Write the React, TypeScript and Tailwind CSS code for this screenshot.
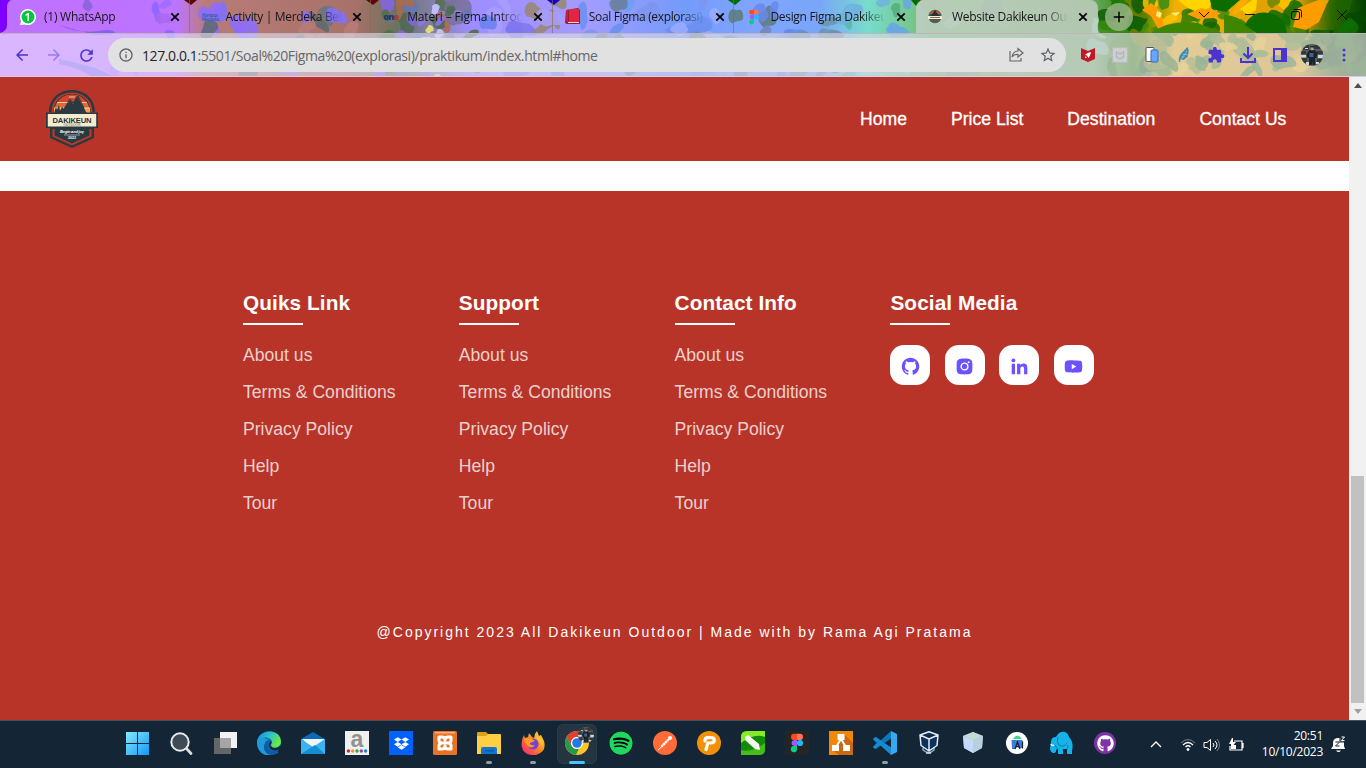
import React from 'react';
import type { ReactNode } from 'react';
import { BiLogoGithub, BiLogoInstagramAlt, BiLogoLinkedin, BiLogoYoutube } from 'react-icons/bi';
import { FaSpotify, FaDropbox, FaGithub } from 'react-icons/fa';
import { MdExtension, MdArrowBack, MdArrowForward, MdRefresh, MdAdd, MdStarBorder, MdOutlineInfo } from 'react-icons/md';

function makeRandom(seed: number) {
  let s = seed;
  return () => {
    s = (s * 16807) % 2147483647;
    return s / 2147483647;
  };
}

type Zone = { from: number; to: number; colors: string[]; count: number; size: number };

const zones: Zone[] = [
  { from: 75, to: 190, colors: ['#8d63ff', '#a868ee', '#8a62dc', '#9f6cff'], count: 9, size: 0.6 },
  { from: 200, to: 362, colors: ['#8d6cff', '#8c6cff', '#6b7480', '#b97c78', '#7f70ff', '#5f6a6c'], count: 34, size: 1 },
  { from: 372, to: 475, colors: ['#4c6a50', '#aa6b4c', '#8465e8', '#546d4a', '#77719a', '#6174bd'], count: 46, size: 0.75 },
  { from: 420, to: 440, colors: ['#eeec73', '#c9c9ff', '#8f70ff'], count: 12, size: 0.35 },
  { from: 485, to: 560, colors: ['#8375ee', '#6681ef', '#98876c', '#a99dff'], count: 16, size: 0.9 },
  { from: 560, to: 735, colors: ['#6b8fee', '#697e97', '#7e95ee', '#668790', '#9babff', '#6f9df5'], count: 30, size: 0.9 },
  { from: 735, to: 840, colors: ['#5c7d78', '#6988e9', '#7784bb', '#6b94ac', '#6f93f5'], count: 24, size: 0.9 },
  { from: 840, to: 912, colors: ['#55ad7d', '#57b8a4', '#69a6e6', '#83dfb7', '#6fb3e0'], count: 17, size: 0.8 },
  { from: 925, to: 1100, colors: ['#73a96c', '#6da879', '#7ab473', '#87c89b'], count: 16, size: 1 },
  { from: 1105, to: 1150, colors: ['#1c7900', '#3a8a10', '#6f8300', '#0d5a06'], count: 16, size: 0.9 },
  { from: 1150, to: 1320, colors: ['#518000', '#116700', '#ffad00', '#6c8500', '#2c7b00', '#ffc400', '#3c8a12', '#0b6a00'], count: 62, size: 0.8 },
  { from: 1325, to: 1366, colors: ['#075b00', '#0d6e00', '#034800', '#1d6400'], count: 18, size: 0.9 },
];

function CamouflageArt() {
  const random = makeRandom(90211);
  return (
    <svg className="absolute inset-0" width="1366" height="76" viewBox="0 0 1366 76" aria-hidden="true">
      <defs>
        <linearGradient id="art" gradientUnits="userSpaceOnUse" x1="0" x2="1366" y1="0" y2="0">
          <stop offset="0" stopColor="#c071ff" />
          <stop offset=".13" stopColor="#bc74ff" />
          <stop offset=".15" stopColor="#b97c78" />
          <stop offset=".26" stopColor="#a77169" />
          <stop offset=".29" stopColor="#6b735e" />
          <stop offset=".345" stopColor="#9e8dff" />
          <stop offset=".43" stopColor="#a39cff" />
          <stop offset=".5" stopColor="#739bfa" />
          <stop offset=".55" stopColor="#7fa4ff" />
          <stop offset=".6" stopColor="#79a6f8" />
          <stop offset=".635" stopColor="#78dccc" />
          <stop offset=".68" stopColor="#75bd76" />
          <stop offset=".8" stopColor="#6bab60" />
          <stop offset=".83" stopColor="#228000" />
          <stop offset=".86" stopColor="#f0b000" />
          <stop offset=".95" stopColor="#dc9d00" />
          <stop offset=".975" stopColor="#2c6800" />
          <stop offset="1" stopColor="#024000" />
        </linearGradient>
      </defs>
      <path fill="url(#art)" d="M0 0h1366v76H0z" />
      {zones.flatMap((z, zi) =>
        Array.from({ length: z.count }, (_, i) => {
          const x = z.from + random() * (z.to - z.from);
          const y = random() * 76;
          const w = (5 + random() * 13) * z.size;
          const h = (4 + random() * 7) * z.size;
          const a = random() * 180;
          return (
            <path
              key={`${zi}-${i}`}
              fill={z.colors[i % z.colors.length]}
              opacity={0.85}
              transform={`translate(${x} ${y}) rotate(${a})`}
              d={`M${-w} 0C${-w} ${-h * 1.3} ${-w * 0.2} ${-h * 0.7} ${w * 0.1} ${-h}S${w} ${-h * 0.6} ${w} 0S${w * 0.3} ${h * 0.5} 0 ${h}S${-w} ${h * 0.8} ${-w} 0Z`}
            />
          );
        })
      )}
      <path fill="#ffd400" d="M1178 0h36l-5 8-12 4-9-4ZM1240 9l12-9h5l-1 10-8 5Z" />
      <path fill="#ff9c00" d="m1151 3 9 7 5 19-5 3-9-16-9-6ZM1187 14l14-6 20 5-7 5-16 1ZM1298 8l20-8 8 6-7 16-13 8-13-3Z" />
      <path fill="#ffef83" d="m1157 11 5 2-2 5-4-2ZM1171 13l9-1-4 4Z" />
      <path fill="#3e8500" d="M1151 33q20-14 47-10l24 10ZM1224 15q17 0 31 18h-31Z" />
      <path fill="#0c6c00" d="M1245 25q7-15 24-12 16 3 18 20h-31ZM1210 0h30l-14 12-14-3Z" />
      <path fill="#8262f2" d="M59 25q19 9 40 6 14-3 17 3L95 35ZM59 59q20 4 36 9l18 8H91q-12-8-32-12Z" />
      <path fill="#7e00ff" d="M0 0h11q-4 2-4 7v18q0 6-7 8Z" />
      <path fill="#5c0808" d="M184 0h13l-6 5ZM366 0h13l-6 5Z" />
      <path fill="#1600d6" d="M547 0h13l-6 5Z" />
      <path fill="#006c00" d="M728 0h13l-6 5ZM911 0h10l-5 6Z" />
    </svg>
  );
}

function DakikeunBadge() {
  return (
    <svg width={52} height={58} viewBox="0 0 52 58">
      <path fill="#2a3a40" d="M26 0C40 0 49 10 49 22H3C3 10 12 0 26 0ZM4 37h44v11L26 58 4 48Z" />
      <path fill="#c0392a" d="M26 2.400c12 0 20.500 8 20.500 20h-41C5.500 10 14 2.400 26 2.400ZM6.500 39h39v7.500L26 55.500 6.500 46.500Z" />
      <path fill="#2a3a40" d="M26 4c11 0 18.500 7 18.500 18h-37C7.500 11 15 4 26 4ZM8.500 38h35v7.500L26 53.500 8.500 45.500Z" />
      <path fill="#d2452c" d="M26 4.500q10 0 15 8H11q5-8 15-8Z" />
      <path fill="#e06a34" d="M10.500 13h31l2 5h-35Z" />
      <path fill="#f0a04c" d="M8 18h36v5H8Z" />
      <path stroke="#efddb8" strokeWidth=".9" d="M11 12.500h12m10 0h8M8 18h10m19 0h7M23 7h6" />
      <path fill="#2a3a40" d="m8 25 1-5 1-3 1 3 2-5 1 6 2-4 2 2 6-9 3 4 4-8 7 12 2 4 4 3Z" />
      <path fill="none" stroke="#2a3a40" strokeWidth="1" d="m18 19 6-10 3 4 5-7 6 12" />
      <path fill="#2a3a40" d="M0 22.500h52v15.500H0Z" />
      <path fill="#f5ecd0" d="M1.800 24h48.400v12.500H1.800Z" />
      <text x="26" y="32.600" textAnchor="middle" fill="#26363c" fontFamily="Liberation Sans, sans-serif" fontWeight="bold" fontSize="7.6" textLength="39">DAKIKEUN</text>
      <text x="26" y="36" textAnchor="middle" fill="#4a555a" fontFamily="Liberation Sans, sans-serif" fontSize="3.200" textLength="17">OUTDOOR</text>
      <text x="26" y="42.500" textAnchor="middle" fill="#fff" fontFamily="Liberation Sans, sans-serif" fontWeight="bold" fontStyle="italic" fontSize="4" textLength="24">Begin and joy</text>
      <path stroke="#efddb8" strokeWidth=".6" d="M18 45h16" />
      <text x="26" y="49" textAnchor="middle" fill="#fff" fontFamily="Liberation Sans, sans-serif" fontWeight="bold" fontSize="3.500">2023</text>
    </svg>
  );
}

function FigmaMark({ size }: { size: number }) {
  return (
    <svg width={size} height={size} viewBox="0 0 24 24">
      <path fill="#f24e1e" d="M12 1H8.500a3.700 3.700 0 0 0 0 7.400H12Z" />
      <path fill="#ff7262" d="M12 1h3.500a3.700 3.700 0 0 1 0 7.400H12Z" />
      <path fill="#a259ff" d="M12 8.400H8.500a3.700 3.700 0 0 0 0 7.300H12Z" />
      <circle cx="15.6" cy="12" r="3.7" fill="#1abcfe" />
      <path fill="#0acf83" d="M12 15.700H8.500a3.700 3.700 0 1 0 3.500 3.700Z" />
    </svg>
  );
}

function Avatar({ size }: { size: number }) {
  return (
    <svg width={size} height={size} viewBox="0 0 22 22">
      <defs><clipPath id={`avatar${size}`}><circle cx="11" cy="11" r="11" /></clipPath></defs>
      <g clipPath={`url(#avatar${size})`}>
        <path fill="#5b5e5e" d="M0 0h22v22H0z" />
        <path fill="#343938" d="M2 1h6v5H2Zm11 0h6v4h-6ZM0 7h5v3H0Zm16 0h6v3h-6ZM0 14h6v5H0Zm16 1h6v4h-6Z" />
        <path fill="#c9d8e2" d="M0 11h5v2.500H0Zm17 0h5v3h-5ZM5 18h3v3H5Zm10 0h3v2h-3ZM4 4h3v1H4Z" />
        <path fill="#1a222b" d="M8.500 6h5l3 3-1 5h-1.500v7h-2.500v-4l-1 4H8v-7H6.500l-1-4Z" />
        <path fill="#42648b" d="M8.500 9h4v4h-4Z" />
        <path fill="#b1a092" d="M9.800 3h2.800v3.200H9.800Z" />
        <path fill="#20252a" d="M9.300 2h3.800v1.600H9.300Z" />
      </g>
    </svg>
  );
}

const tabs: { title: string; icon: ReactNode; active?: boolean; track: string }[] = [
  {
    title: '(1) WhatsApp',
    track: 'tracking-[-0.25px]',
    icon: (
      <svg width="16" height="16" viewBox="0 0 16 16">
        <path fill="#fff" d="M8 0a8 8 0 1 1-3 15.400L0 16l1.100-4A8 8 0 0 1 8 0Z" />
        <circle cx="8" cy="8" r="6.5" fill="#00c83c" />
        <path fill="#fff" d="M7.500 4H9v8H7.500V6L5.700 7V5.400Z" />
      </svg>
    ),
  },
  {
    title: 'Activity | Merdeka Belajar',
    track: 'tracking-[-0.32px]',
    icon: (
      <svg width="18" height="10" viewBox="0 0 18 10">
        <text y="4.800" fill="#2f66b4" fontFamily="Liberation Sans, sans-serif" fontWeight="bold" fontSize="5" textLength="16">Kampus</text>
        <text y="9" fill="#2f66b4" fontFamily="Liberation Sans, sans-serif" fontWeight="bold" fontSize="4.6" textLength="17">Merdeka</text>
      </svg>
    ),
  },
  {
    title: 'Materi – Figma Introduction',
    track: 'tracking-[-0.15px]',
    icon: <span className="font-['Open_Sans',sans-serif] text-[9px] font-extrabold tracking-[-0.7px] text-[#183c68]">on<span className="text-[#a33c3c]">e</span></span>,
  },
  {
    title: 'Soal Figma (explorasi)',
    track: 'tracking-[-0.35px]',
    icon: (
      <svg width="16" height="17" viewBox="0 0 16 17">
        <path fill="#9b1b31" d="M1 2 13 0l2 2v14H2L0 15Z" />
        <path fill="#e02643" d="M4 1h10v13H4Z" />
        <path fill="#f0d8dc" d="M3 14h11v1H3Z" />
        <path fill="#c71e39" d="M1 2h2v12l-2 1Z" />
      </svg>
    ),
  },
  { title: 'Design Figma Dakikeun', track: 'tracking-[-0.3px]', icon: <FigmaMark size={16} /> },
  {
    title: 'Website Dakikeun Outdoor',
    active: true,
    track: 'tracking-[-0.3px]',
    icon: (
      <svg width="14" height="15" viewBox="0 0 14 15">
        <circle cx="7" cy="7.5" r="6.7" fill="#555e53" />
        <path fill="#e25132" d="M1.500 5Q7-2 12.500 5Z" />
        <path fill="#243137" d="m3 6 2-2 2-3 2 3 3 3H2Z" />
        <path fill="#f4ead0" d="M0 7h14v3H0Z" />
        <path stroke="#555b51" strokeWidth=".8" d="M2 8.500h10M3 12h8" />
      </svg>
    ),
  },
];

function TabStrip() {
  return (
    <div className="relative flex h-[33px] pl-2">
      {tabs.map((tab, i) => (
        <div
          key={tab.title}
          className={
            'flex w-[181.6px] shrink-0 items-center pl-3 ' +
            (tab.active ? 'rounded-t-lg bg-[#d8d5da]/65' : i < 4 ? 'border-r border-[#8c6854]/60' : '')
          }
        >
          <div className="flex h-4 w-[18px] shrink-0 items-center">{tab.icon}</div>
          <div className={"ml-1.5 w-[116px] overflow-hidden whitespace-nowrap font-['Open_Sans',sans-serif] text-[12px] text-[#171719] [mask-image:linear-gradient(to_right,black_92px,transparent_116px)] " + tab.track}>
            {tab.title}
          </div>
          <svg className="ml-[9px] shrink-0" width="12" height="12" viewBox="0 0 12 12" stroke="#000" strokeWidth="1.800"><path d="m2.300 2.300 7.400 7.400m0-7.400L2.300 9.700" /></svg>
        </div>
      ))}
      <div className="ml-[7px] mt-[3px] flex h-7 w-7 items-center justify-center rounded-full bg-[#a6b997]/75 text-black">
        <MdAdd size={18} />
      </div>
      <div className="ml-auto mt-1.5 mr-4 flex h-[18px] items-center gap-[30px]">
        <svg width="16" height="16" viewBox="0 0 16 16" fill="none" stroke="#0c1200"><path d="m3 5 5 5 5-5" /></svg>
        <svg width="16" height="16" viewBox="0 0 16 16" fill="none" stroke="#0c1200"><path d="M3 7.500h10" /></svg>
        <svg width="16" height="16" viewBox="0 0 16 16" fill="none" stroke="#0c1200"><rect x="3.5" y="4.5" width="8" height="8" rx="1.5" /><path d="M5.500 2.500h6q2 0 2 2v6" /></svg>
        <svg width="16" height="16" viewBox="0 0 16 16" fill="none" stroke="#0c1200"><path d="m3 3 10 10m0-10L3 13" /></svg>
      </div>
    </div>
  );
}

function Toolbar() {
  return (
    <div className="relative flex h-[43px] items-center border-t border-[#bdb5bb] bg-linear-to-r from-[#f0eeff]/55 via-[#dcdcea]/60 to-[#dcd8dc]/70 text-[#4c32cf]">
      <MdArrowBack className="ml-[13px]" size={18} />
      <MdArrowForward className="ml-3.5 opacity-45" size={18} />
      <MdRefresh className="ml-3.5" size={19} />
      <div className="ml-3 flex h-[34px] w-[958px] items-center rounded-full bg-[#e1e1e1] pl-2.5 pr-[9px] text-[#5f6368]">
        <MdOutlineInfo size={16} />
        <div className="ml-2 whitespace-nowrap font-['Open_Sans',sans-serif] text-[14px] tracking-[-0.41px] text-[#666] [font-variant-ligatures:none]">
          <span className="text-[#242424]">127.0.0.1</span>:5501/Soal%20Figma%20(explorasi)/praktikum/index.html#home
        </div>
        <svg className="ml-auto" width="17" height="16" viewBox="0 0 17 16" fill="none" stroke="#666" strokeWidth="1.2"><path d="M2 4v10h11v-3M4 10q1-6 6-6V1.500L15 6l-5 4V7.500Q6 7 4 10Z" /></svg>
        <MdStarBorder className="ml-[14px]" size={18} />
      </div>
      <svg className="ml-3.5" width="16" height="16" viewBox="0 0 16 16"><path fill="#c01926" d="M1 1l7 3 7-3v11l-7 3-7-3Z" /><path fill="#fff" d="M11 5 7.500 6 5 8l2 .5L8.500 11 10 8.500Z" /><circle cx="5.800" cy="10.300" r=".8" fill="#fff" /></svg>
      <svg className="ml-4" width="16" height="16" viewBox="0 0 16 16"><path fill="#d5d5db" stroke="#b9bcc4" opacity=".8" d="M.5.5h15v15H.5z" /><path fill="none" stroke="#b4b7c0" strokeWidth="1.500" d="M4.500 5v5l3.500 2 3.500-2V5L8 7Z" /></svg>
      <svg className="ml-4" width="16" height="16" viewBox="0 0 16 16"><rect x="2" y=".5" width="8" height="14" rx="1" fill="#fafafa" stroke="#555" /><rect x="7" y="3" width="7" height="12" rx="1" fill="#69a5ff" stroke="#366ac0" /></svg>
      <svg className="ml-4" width="16" height="16" viewBox="0 0 16 16"><path fill="#448cad" d="M3 15C1.500 8 7 5 11.500 0q2 3 1 6.500l-1 1 .5 2-2 1.500-2 2-3-.5-1 2.500Z" /><path stroke="#a8d4d7" strokeWidth=".6" d="m4 14 7-10M5.500 10h3M7 7.500h4" /></svg>
      <MdExtension className="ml-[15px]" size={18} />
      <svg className="ml-3.5" width="18" height="18" viewBox="0 0 18 18" fill="none" stroke="currentColor" strokeWidth="2"><path d="M9 1v10.500M4.500 7.500 9 12l4.500-4.500M2 12v4h14v-4" /></svg>
      <svg className="ml-4" width="14" height="14" viewBox="0 0 14 14"><path fill="currentColor" fillRule="evenodd" d="M0 0h14v14H0ZM2 2v10h6V2Z" /></svg>
      <span className="ml-3.5"><Avatar size={22} /></span>
      <svg className="ml-[18px]" width="6" height="16" viewBox="0 0 6 16" fill="currentColor"><circle cx="3" cy="3" r="1.5" /><circle cx="3" cy="8" r="1.5" /><circle cx="3" cy="13" r="1.5" /></svg>
    </div>
  );
}

const links = ['About us', 'Terms & Conditions', 'Privacy Policy', 'Help', 'Tour'];

function FooterHeading({ children }: { children: ReactNode }) {
  return (
    <>
      <h3 className="h-8 whitespace-nowrap text-[20.8px] font-bold leading-6 tracking-[0.08px] text-white">{children}</h3>
      <div className="h-0.5 w-[60px] bg-white" />
    </>
  );
}

function LinkColumn({ title }: { title: string }) {
  return (
    <div>
      <FooterHeading>{title}</FooterHeading>
      <ul className="mt-3">
        {links.map((l) => (
          <li key={l} className="h-[37px] whitespace-nowrap text-[17.6px] leading-[37px] text-[#ead0cd]">{l}</li>
        ))}
      </ul>
    </div>
  );
}

function SitePage() {
  return (
    <div className="flex h-[643px] font-['Liberation_Sans',Arial,sans-serif]">
      <main className="flex w-[1349px] flex-col bg-white">
        <nav className="flex h-[84px] items-center bg-[#b93428] pl-[46px] pr-[62.600px]">
          <DakikeunBadge />
          <div className="ml-auto flex gap-11 text-[17.6px] text-white [-webkit-text-stroke:0.3px_white]">
            <a>Home</a><a>Price List</a><a>Destination</a><a>Contact Us</a>
          </div>
        </nav>
        <footer className="mt-[30px] flex flex-1 flex-col bg-[#b93428] pt-[100px]">
          <div className="grid grid-cols-[repeat(4,215.8px)] pl-[243px]">
            <LinkColumn title="Quiks Link" />
            <LinkColumn title="Support" />
            <LinkColumn title="Contact Info" />
            <div>
              <FooterHeading>Social Media</FooterHeading>
              <div className="mt-5 flex gap-[14.5px] text-[#6c52ff]">
                {[BiLogoGithub, BiLogoInstagramAlt, BiLogoLinkedin, BiLogoYoutube].map((Icon, i) => (
                  <div key={i} className="flex h-10 w-10 items-center justify-center rounded-[14px] bg-white pt-0.5"><Icon size={21} /></div>
                ))}
              </div>
            </div>
          </div>
          <p className="mt-[98px] text-center text-[14px] leading-6 tracking-[2px] text-white">
            @Copyright 2023 All Dakikeun Outdoor | Made with by Rama Agi Pratama
          </p>
        </footer>
      </main>
      <div className="flex w-[17px] flex-col items-center justify-between bg-[#f1f1f1] py-[6px]">
        <svg width="8" height="5" viewBox="0 0 8 5"><path fill="#505050" d="m0 5 4-5 4 5Z" /></svg>
        <div className="mt-auto mb-1.5 h-[227px] w-[13px] bg-[#c1c1c1]" />
        <svg width="8" height="5" viewBox="0 0 8 5"><path fill="#a0a0a0" d="m0 0 4 5 4-5Z" /></svg>
      </div>
    </div>
  );
}

const Glyph = ({ children }: { children: ReactNode }) => <svg width="24" height="24" viewBox="0 0 24 24">{children}</svg>;

const apps: { name: string; mark?: 'open' | 'active'; icon: ReactNode }[] = [
  { name: 'start', icon: <Glyph><defs><linearGradient id="win" x2="1" y2="1"><stop stopColor="#83eaff" /><stop offset="1" stopColor="#1498f5" /></linearGradient></defs><path fill="url(#win)" d="M1 1h11v11H1ZM13 1h11v11H13ZM1 13h11v11H1Zm12 0h11v11H13Z" /></Glyph> },
  { name: 'search', icon: <Glyph><path stroke="#ddd" strokeWidth="2.7" strokeLinecap="round" d="m17 17 5 5.500" /><circle cx="11" cy="11" r="8.7" fill="#3e4b57" stroke="#e8e9ea" strokeWidth="2" /></Glyph> },
  { name: 'tasks', icon: <Glyph><path fill="#f2f2f2" d="M7 1h17v16H7Z" /><path fill="#666" d="M1 7h17v16H1Z" /><path fill="#a5a5a5" d="M7 7h11v10H7Z" /></Glyph> },
  { name: 'edge', icon: <Glyph><defs><linearGradient id="edge" x2="1" y2=".5"><stop stopColor="#1589d8" /><stop offset=".5" stopColor="#2bc1c9" /><stop offset="1" stopColor="#6bea45" /></linearGradient></defs><circle cx="12" cy="12" r="12" fill="#0b64ad" /><path fill="url(#edge)" d="M0 12C0-2 24-4 24 11c0 5-8 8-10 3 1-2 2-4-1-6C8 4 1 8 0 14Z" /><path fill="#2299dc" d="M0 12C1 5 8 6 12 9c-6 0-6 11 2 15C5 26 0 18 0 12Z" /><path fill="#105aa0" d="M12 9c-5 4-2 12 5 12h5c-4 4-9 3-11 2C5 20 6 11 12 9Z" /><path fill="#142635" d="M14 10c1 2 0 3-1 4 1 4 7 4 10 1l2 1-2 2c-5 3-12 1-11-5Z" /></Glyph> },
  { name: 'mail', icon: <Glyph><path fill="#086cb9" d="m0 8 12-7 12 7v5H0Z" /><path fill="#f2f5f7" d="M1 8h22v6l-11 5Z" /><path fill="#39b4ef" d="m0 8 12 8 12-8v15H0Z" /><path fill="#168dd3" d="m0 23 14-9 10 9Z" /></Glyph> },
  { name: 'amazon', icon: <Glyph><path fill="#f0f0ef" d="M0 0h24v24H0Z" /><text x="12" y="15.500" textAnchor="middle" fontFamily="Liberation Sans, sans-serif" fontWeight="bold" fontSize="23" fill="#929292">a</text>{['#ee1d24', '#f1912b', '#2d9e58', '#9440a8', '#1683ca'].map((c, i) => <circle key={c} cx={3.4 + i * 4.3} cy="20" r="1.7" fill={c} />)}</Glyph> },
  { name: 'dropbox', icon: <div className="flex h-6 w-6 items-center justify-center bg-[#0061ff] text-white"><FaDropbox size={15} /></div> },
  { name: 'xampp', icon: <Glyph><rect width="24" height="24" rx="1.5" fill="#e97322" /><path fill="#ffad75" d="M2 1h20v1.500H2Z" /><path fill="none" stroke="#fff" strokeWidth="3" strokeLinejoin="round" strokeLinecap="round" d="M6 6h3q3 0 3 3 0-3 3-3h3v3q0 3-3 3h-6q-3 0-3-3V6Zm0 12h3q3 0 3-3 0 3 3 3h3v-3q0-3-3-3H9q-3 0-3 3v3Z" /></Glyph> },
  { name: 'explorer', mark: 'open', icon: <Glyph><path fill="#dca215" d="M0 2q0-1 1-1h8l2 2h12v7H0Z" /><path fill="#ffce43" d="M0 5h9l2-2h12q1 0 1 1v19H0Z" /><path fill="#1075ce" d="M4 23v-5q0-2 2-2h12q2 0 2 2v5Z" /><path fill="#075ba8" d="M8 19h9v1.500H8Z" /></Glyph> },
  { name: 'firefox', mark: 'open', icon: <Glyph><defs><linearGradient id="fox" x1="1" x2="0" y2="1"><stop stopColor="#ffe83c" /><stop offset=".5" stopColor="#ff8327" /><stop offset="1" stopColor="#f41878" /></linearGradient></defs><path fill="url(#fox)" d="M3 4l1 3 3-1 1-4 3 4 2 1q0-4 3-7l2 5 2-1 3 6q3 11-8 14Q2 25 .6 15 0 9 3 4Z" /><circle cx="12" cy="13" r="5.500" fill="#7541d8" /><path fill="#ff9b24" d="M3 7q5 0 8 1l3 2-5 2q0 3 5 2-4 5-8 0Q3 11 3 7Z" /><path fill="#ffc629" d="M16 4q8 6 5 12-1-5-6-9Z" /></Glyph> },
  { name: 'chrome', mark: 'active', icon: <Glyph><circle cx="12" cy="12" r="12" fill="#fcc725" /><path fill="#e43d31" d="M12 0c4 0 8 2 10.500 6H12a6 6 0 0 0-5.200 9L1.600 6A12 12 0 0 1 12 0Z" /><path fill="#27994a" d="m1.600 6 5.200 9a6 6 0 0 0 5.200 3l2-.4L11 24A12 12 0 0 1 1.600 6Z" /><circle cx="12" cy="12" r="6" fill="#fff" /><circle cx="12" cy="12" r="4.800" fill="#2775ea" /></Glyph> },
  { name: 'spotify', icon: <div className="rounded-full bg-black"><FaSpotify size={24} color="#1ed760" /></div> },
  { name: 'postman', icon: <Glyph><circle cx="12" cy="12" r="12" fill="#ff6c37" /><path stroke="#fff" strokeWidth="2.4" strokeLinecap="round" d="m9 15 6-6" /><path stroke="#fff" strokeWidth=".9" d="m5 19 9-8" /><circle cx="17" cy="7" r="2" fill="#fff" /><path stroke="#ff6c37" strokeWidth=".5" d="m9 13 2 2m0-4 2 2m0-4 2 2" /></Glyph> },
  { name: 'parking', icon: <Glyph><circle cx="12" cy="12" r="12" fill="#f29109" /><path fill="none" stroke="#fff" strokeWidth="3.2" strokeLinecap="round" strokeLinejoin="round" d="m9 18.500 1.800-6.500h3q3.500 0 3.500-2.700t-3.500-2.700H10q-2.300.6-2 3.400" /></Glyph> },
  { name: 'corel', icon: <Glyph><path fill="#128b0a" d="M0 6q0-6 6-6h18v18q0 6-6 6H0Z" /><path fill="#82ed27" d="M0 6q0-6 6-6h18v6q-11-4-24 6Z" /><path fill="#48bd17" d="M0 19q11 3 24-7v6q0 6-6 6H0Z" /><path fill="#f4f7ee" d="m4 6 3-2 11 9 1 6-5-1L4 9Z" /></Glyph> },
  { name: 'figma', icon: <div className="flex h-6 w-6 items-center justify-center bg-[#252525]"><FigmaMark size={20} /></div> },
  { name: 'diagrams', icon: <Glyph><path fill="#f08705" d="M0 0h24v24H0Z" /><path fill="#cb6912" d="m15 3 9 9v12H10l-7-5Z" /><path stroke="#fff" strokeWidth="2" d="M12 8 7 16m5-8 5 8" /><path fill="#fff" d="M8.500 3h7v6h-7ZM3 14h7v6H3Zm11 0h7v6h-7Z" /></Glyph> },
  { name: 'vscode', mark: 'open', icon: <Glyph><path fill="#0878bd" d="m0 8 2-2 5 4L18 0l1 7-9 6-7 5-3-2 4-4Z" /><path fill="#168bd1" d="m0 16 2 2 5-4 11 10 1-7-9-6-7-5-3 2 4 4Z" /><path fill="#38a9f1" d="m18 0 6 3v18l-6 3Z" /></Glyph> },
  { name: 'virtualbox', icon: <Glyph><path fill="none" stroke="#8dabca" strokeWidth="1.500" d="M6 17v2q6 5 11 0v-3" /><path fill="#0c315c" stroke="#e3edf6" strokeWidth="1.5" strokeLinejoin="round" d="m3 4 9-3.200L21 4l-1 10.500-8 5.500-8-5.500ZM3 4l9 4 9-4M12 8v12" /><path stroke="#d5e3f3" strokeWidth="1.500" d="M9 22h5" /></Glyph> },
  { name: 'netbeans', icon: <Glyph><path fill="#9cb7dc" d="m12 1 10 4-1 12-9 5-9-5L2 5Z" /><path fill="#c3dbd3" d="m12 1 10 4-10 4L2 5Z" /><path fill="#b9d0dc" d="m12 9 10-4-1 12-9 5Z" /><path fill="#c5d9fa" d="M2 5l10 4v13l-9-5Z" /></Glyph> },
  { name: 'studio', icon: <Glyph><circle cx="12" cy="12" r="11" fill="#fff" /><path fill="#397ee0" d="M6.500 9h11v8h-4l-1-3-2 4H7Z" /><path fill="#3bd787" d="M8 8q4-7 9 0Z" /><path fill="none" stroke="#202529" strokeWidth="1.3" d="m10 18 2.500-7 2.500 7m-4-2.500h3m3.500-5v7" /></Glyph> },
  { name: 'mysql', icon: <Glyph><path fill="#16b2ea" d="M2 11Q2 6 7 6q3-6 9-5 3 1 4 5 5 5 3 14v3h-5v-5h-4v5H9v-5q-2 0-2 2t-3 2q-3-1-3-5Z" /><path fill="none" stroke="#077da9" d="M9 6q-2 5 1 8 5 3 8-2M6 14q1 3 3 4m9 0q1-2 1-4" /><path stroke="#fff" strokeWidth="1.600" d="M2 13q1 2 3 1" /></Glyph> },
  { name: 'github', icon: <div className="flex h-[22px] w-[22px] items-center justify-center rounded-full bg-[#8132a6] text-white"><FaGithub size={17} /></div> },
];

function Taskbar() {
  return (
    <div className="flex h-12 items-center border-t border-[#434e56] bg-[#142635] pl-[115px] font-['Open_Sans',sans-serif] text-white">
      {apps.map((app) => (
        <div key={app.name} className="relative flex h-12 w-11 shrink-0 items-center justify-center pb-px">
          {app.mark === 'active' && <div className="absolute left-0.5 top-[3px] h-10 w-10 rounded-md border border-[#2b3c49] bg-[#243541]" />}
          <div className="relative -translate-y-px">{app.icon}</div>
          {app.mark === 'active' && <div className="absolute right-[5px] top-[6px]"><Avatar size={16} /></div>}
          {app.mark && <div className={'absolute bottom-[5px] h-[3px] rounded-full ' + (app.mark === 'active' ? 'w-4 bg-[#4cc2ff]' : 'w-1.5 bg-[#939da4]')} />}
        </div>
      ))}
      <svg className="ml-[23px]" width="12" height="8" viewBox="0 0 12 8" fill="none" stroke="#fff" strokeWidth="1.3"><path d="m1 6 5-5 5 5" /></svg>
      <svg className="ml-[18px]" width="16" height="14" viewBox="0 0 16 14" fill="none" stroke="#fff"><path opacity=".4" d="M1 5q7-7 14 0" /><path strokeWidth="1.3" d="M3 7q5-5 10 0M5.500 9q2.500-2.500 5 0" /><circle cx="8" cy="11.5" r="1" fill="#fff" /></svg>
      <svg className="ml-[7px]" width="17" height="16" viewBox="0 0 17 16" fill="none" stroke="#fff"><path d="M1 5.500h3L7.500 2.500v11L4 10.500H1ZM10 6q2 2 0 4m2-6q4 4 0 8" /><path opacity=".4" d="M14 2q5 6 0 12" /></svg>
      <svg className="ml-2" width="17" height="14" viewBox="0 0 17 14"><path fill="none" stroke="#fff" strokeWidth="1.2" d="M6 3h8v9H2V8m13-3v5" /><path fill="#fff" d="M4 0 1 6h2v4l5-6H5V0Z" /><path fill="#fff" d="M3 7h5v4H3Z" /></svg>
      <div className="ml-2.5 w-[68px] pb-0.5 text-right text-[12px] leading-4 tracking-[-0.25px]"><div>20:51</div><div className="whitespace-nowrap">10/10/2023</div></div>
      <svg className="ml-2" width="15" height="17" viewBox="0 0 15 17"><path fill="#fff" d="M2 7q0-5 5.500-5 5.500 0 5.500 5v3l1 3H0l2-3Zm3 7.500h5q-2.500 3-5 0Z" /><path fill="none" stroke="#142635" d="M4.500 6h4l-4 4h4M9 0v6h6" /><path fill="#142635" d="M9.500 0H15v5.500H9.500Z" /><path fill="none" stroke="#fff" d="M10.500 1h3l-3 3.500h3" /></svg>
    </div>
  );
}

export default function App() {
  return (
    <div className="h-[768px] w-[1366px] overflow-hidden bg-white">
      <header className="relative h-[77px] border-b border-[#d8c9f2]">
        <CamouflageArt />
        <TabStrip />
        <Toolbar />
      </header>
      <SitePage />
      <Taskbar />
    </div>
  );
}
